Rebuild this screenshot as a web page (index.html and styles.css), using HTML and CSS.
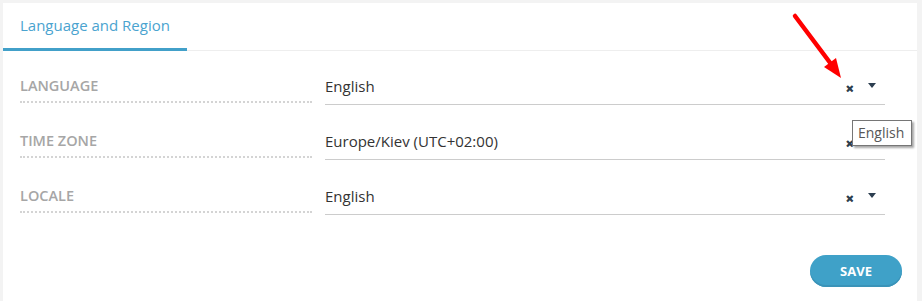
FILE: index.html
```html
<!DOCTYPE html>
<html lang="en">
<head>
<meta charset="utf-8">
<title>Language and Region</title>
<link rel="stylesheet" href="styles.css">
</head>
<body>
<div class="page">
  <div class="card">
    <div class="tabs">
      <div class="tab active">Language and Region</div>
    </div>
    <div class="form">
      <div class="row">
        <div class="label">LANGUAGE</div>
        <div class="field">
          <span class="value">English</span>
          <span class="clear">&#x2715;</span>
          <span class="caret"></span>
        </div>
      </div>
      <div class="row">
        <div class="label">TIME ZONE</div>
        <div class="field">
          <span class="value">Europe/Kiev (UTC+02:00)</span>
          <span class="clear">&#x2715;</span>
          <span class="caret"></span>
        </div>
      </div>
      <div class="row">
        <div class="label">LOCALE</div>
        <div class="field">
          <span class="value">English</span>
          <span class="clear">&#x2715;</span>
          <span class="caret"></span>
        </div>
      </div>
    </div>
    <div class="actions">
      <button class="save">SAVE</button>
    </div>
  </div>
  <div class="tooltip">English</div>
  <svg class="arrow" width="922" height="301" viewBox="0 0 922 301">
    <line x1="795" y1="16" x2="831" y2="64" stroke="#ff0000" stroke-width="4.5" stroke-linecap="round"/>
    <polygon points="841,78 824,67 836,58" fill="#ff0000"/>
  </svg>
</div>
</body>
</html>
```

FILE: styles.css
```css
* { box-sizing: border-box; }
html, body { margin: 0; padding: 0; }
body {
  background: #f3f3f3;
  font-family: "Open Sans", "Liberation Sans", sans-serif;
  width: 922px;
  height: 301px;
  overflow: hidden;
}
.page {
  position: relative;
  padding: 3px 5px 0 3px;
  height: 301px;
}
.card {
  background: #ffffff;
  height: 298px;
  overflow: hidden;
}
.tabs {
  display: flex;
  border-bottom: 1px solid #eeeeee;
  height: 48px;
}
.tab {
  padding: 0 17px;
  width: 184px;
  font-size: 15px;
  line-height: 45px;
  color: #4aa3cf;
}
.tab.active {
  border-bottom: 3px solid #42a0c9;
  height: 48px;
}
.form {
  padding: 17px 32px 0 17px;
  display: flex;
  flex-direction: column;
  gap: 18px;
}
.row {
  display: grid;
  grid-template-columns: 292px 1fr;
  column-gap: 13px;
  align-items: start;
}
.label {
  font-size: 14.5px;
  font-weight: 600;
  color: #a6a6a6;
  line-height: 20px;
  padding: 8px 0 5px;
  border-bottom: 2px dotted #d4d4d4;
}
.field {
  display: flex;
  align-items: center;
  height: 37px;
  padding: 8px 0 8px 0;
  border-bottom: 1px solid #cccccc;
  font-size: 15px;
  line-height: 20px;
  color: #333333;
}
.value { flex: 1; }
.clear {
  font-size: 9px;
  font-weight: 700;
  color: #2f3f4f;
  margin-top: 5px;
  margin-right: 14px;
  -webkit-text-stroke: 0.8px #2f3f4f;
}
.caret {
  width: 0;
  height: 0;
  border-left: 4.5px solid transparent;
  border-right: 4.5px solid transparent;
  border-top: 5px solid #2c3e50;
  margin-right: 9px;
  margin-top: -1px;
}
.actions {
  display: flex;
  justify-content: flex-end;
  padding: 40px 15px 0 0;
}
.save {
  width: 92px;
  height: 32px;
  border: none;
  border-radius: 16px;
  background: #3fa1c8;
  box-shadow: inset 0 -2px 0 #3a93b8;
  color: #ffffff;
  font-family: "Open Sans", "Liberation Sans", sans-serif;
  font-weight: 700;
  font-size: 13px;
  padding: 0;
}
.tooltip {
  position: absolute;
  left: 852px;
  top: 120px;
  width: 60px;
  height: 26px;
  background: #ffffff;
  border: 1px solid #767676;
  box-shadow: 2px 2px 2px rgba(0, 0, 0, 0.35);
  font-size: 14px;
  line-height: 23px;
  color: #575757;
  padding-left: 5px;
}
.arrow {
  position: absolute;
  left: 0;
  top: 0;
  pointer-events: none;
}
```
